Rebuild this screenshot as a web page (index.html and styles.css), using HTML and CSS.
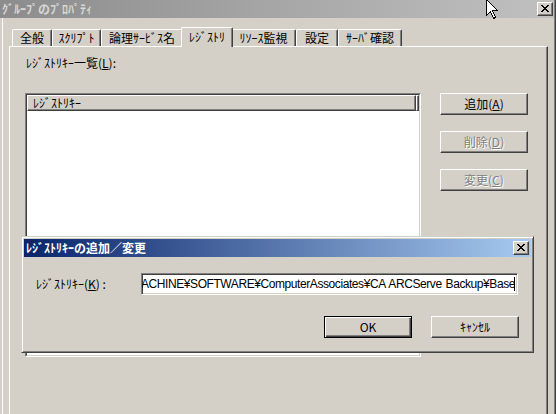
FILE: index.html
```html
<!DOCTYPE html>
<html lang="ja">
<head>
<meta charset="utf-8">
<title>ｸﾞﾙｰﾌﾟのﾌﾟﾛﾊﾟﾃｨ</title>
<link rel="stylesheet" href="styles.css">
</head>
<body>
<div class="window">
  <div class="titlebar">
    <span class="title inactive">ｸﾞﾙｰﾌﾟのﾌﾟﾛﾊﾟﾃｨ</span>
    <span class="capbtn">
      <svg class="xglyph" width="8" height="7" viewBox="0 0 8 7" shape-rendering="crispEdges"><path d="M0 0h2v1h-2z M6 0h2v1h-2z M1 1h2v1h-2z M5 1h2v1h-2z M2 2h4v1h-4z M3 3h2v1h-2z M2 4h4v1h-4z M1 5h2v1h-2z M5 5h2v1h-2z M0 6h2v1h-2z M6 6h2v1h-2z" fill="#000"/></svg>
    </span>
  </div>
  <div class="client">
    <div class="tabs">
      <div class="tab t1">全般</div>
      <div class="tab t2">ｽｸﾘﾌﾟﾄ</div>
      <div class="tab t3">論理ｻｰﾋﾞｽ名</div>
      <div class="tab t4 sel">ﾚｼﾞｽﾄﾘ</div>
      <div class="tab t5">ﾘｿｰｽ監視</div>
      <div class="tab t6">設定</div>
      <div class="tab t7">ｻｰﾊﾞ確認</div>
    </div>
    <div class="panel">
      <div class="label">ﾚｼﾞｽﾄﾘｷｰ一覧(<u>L</u>):</div>
      <div class="row">
        <div class="list">
          <div class="list-inner">
            <div class="lhead">
              <div class="col">ﾚｼﾞｽﾄﾘｷｰ</div>
              <div class="colfill"></div>
            </div>
            <div class="lbody"></div>
          </div>
        </div>
        <div class="btns">
          <div class="btn">追加(<u>A</u>)</div>
          <div class="btn dis">削除(<u>D</u>)</div>
          <div class="btn dis">変更(<u>C</u>)</div>
        </div>
      </div>
    </div>
  </div>
</div>

<div class="dlg">
  <div class="dlgtitle">
    <span class="title">ﾚｼﾞｽﾄﾘｷｰの追加／変更</span>
    <span class="capbtn">
      <svg class="xglyph" width="8" height="7" viewBox="0 0 8 7" shape-rendering="crispEdges"><path d="M0 0h2v1h-2z M6 0h2v1h-2z M1 1h2v1h-2z M5 1h2v1h-2z M2 2h4v1h-4z M3 3h2v1h-2z M2 4h4v1h-4z M1 5h2v1h-2z M5 5h2v1h-2z M0 6h2v1h-2z M6 6h2v1h-2z" fill="#000"/></svg>
    </span>
  </div>
  <div class="dlgbody">
    <div class="field">
      <span class="flabel">ﾚｼﾞｽﾄﾘｷｰ(<u>K</u>) :</span>
      <div class="edit">
        <span class="etext">HKEY_LOCAL_MACHINE¥SOFTWARE¥ComputerAssociates¥CA ARCServe Backup¥Base</span>
        <span class="caret"></span>
      </div>
    </div>
    <div class="actions">
      <div class="btn def">OK</div>
      <div class="btn">ｷｬﾝｾﾙ</div>
    </div>
  </div>
</div>

<svg class="cursor" width="13" height="21" viewBox="0 0 13 21" shape-rendering="crispEdges">
  <path d="M0.5 0.5 L0.5 16.5 L4.5 12.5 L7.5 19.5 L9.5 18.5 L6.5 11.5 L11.5 11.5 Z" fill="#fff" stroke="#000" stroke-width="1" stroke-linejoin="miter"/>
</svg>
</body>
</html>
```

FILE: styles.css
```css
* { box-sizing: border-box; }
html, body { margin: 0; padding: 0; }
body {
  width: 556px;
  height: 414px;
  overflow: hidden;
  position: relative;
  background: #d4d0c8;
  font-family: "Noto Sans CJK JP", "Noto Sans", sans-serif;
  font-size: 12px;
  line-height: 14px;
  color: #000;
}
u { text-decoration: underline; text-underline-offset: 1px; }

/* main window */
.window {
  width: 556px;
  height: 414px;
  border-right: 1px solid #404040;
  box-shadow: inset -1px 0 #808080;
}
.titlebar {
  height: 18px;
  margin-right: 1px;
  padding-left: 2px;
  display: flex;
  align-items: center;
  justify-content: space-between;
  background: linear-gradient(to right, #8c8c8c, #c0c0c0);
}
.title {
  font-weight: bold;
  color: #fff;
  white-space: nowrap;
}
.title.inactive { color: #d8d8d8; }
.capbtn {
  width: 16px;
  height: 14px;
  margin-right: 1px;
  background: #d4d0c8;
  border: 1px solid;
  border-color: #fff #404040 #404040 #fff;
  box-shadow: inset -1px -1px #808080;
  display: flex;
  align-items: center;
  justify-content: center;
  padding: 0 1px 1px 0;
}
.xglyph { display: block; }

.client {
  margin-left: 2px;
  border-left: 1px solid #fff;
  padding: 9px 0 0 6px;
  height: 396px;
}

/* tabs */
.tabs {
  display: flex;
  align-items: flex-end;
  height: 19px;
  padding-left: 3px;
}
.tab {
  height: 17px;
  border-top: 1px solid #fff;
  border-left: 1px solid #fff;
  border-right: 1px solid #404040;
  border-radius: 2px 2px 0 0;
  box-shadow: inset -1px 0 #808080;
  text-align: center;
  line-height: 15px;
  white-space: nowrap;
  flex-shrink: 0;
}
.t1 { width: 40px; }
.t2 { width: 49px; }
.t3 { width: 82px; }
.t4 { width: 48px; }
.t5 { width: 65px; }
.t6 { width: 42px; }
.t7 { width: 64px; }
.tab.sel {
  width: 52px;
  height: 20px;
  margin: 0 -2px -1px -2px;
  padding-top: 1px;
  position: relative;
  z-index: 1;
  background: #d4d0c8;
}

/* tab panel */
.panel {
  width: 539px;
  height: 380px;
  border-top: 1px solid #fff;
  border-left: 1px solid #fff;
  border-right: 1px solid #404040;
  box-shadow: inset -1px 0 #808080;
  padding: 9px 0 0 15px;
}
.label {
  margin-left: 1px;
  white-space: nowrap;
}
.row {
  display: flex;
  gap: 19px;
  margin-top: 23px;
}

/* list view */
.list {
  width: 396px;
  height: 264px;
  border: 1px solid;
  border-color: #808080 #fff #fff #808080;
}
.list-inner {
  height: 100%;
  border: 1px solid;
  border-color: #404040 #d4d0c8 #d4d0c8 #404040;
  background: #fff;
  display: flex;
  flex-direction: column;
}
.lhead {
  display: flex;
  height: 16px;
  background: #d4d0c8;
}
.col, .colfill {
  height: 16px;
  border: 1px solid;
  border-color: #fff #404040 #404040 #fff;
  box-shadow: inset -1px -1px #808080;
}
.col {
  width: 389px;
  padding-left: 5px;
  line-height: 13px;
  white-space: nowrap;
}
.colfill { flex: 1; }
.lbody { flex: 1; background: #fff; }

/* buttons */
.btns {
  display: flex;
  flex-direction: column;
  gap: 16px;
}
.btn {
  width: 88px;
  height: 22px;
  border: 1px solid;
  border-color: #fff #404040 #404040 #fff;
  box-shadow: inset -1px -1px #808080;
  background: #d4d0c8;
  text-align: center;
  line-height: 19px;
  white-space: nowrap;
}
.btn.dis {
  color: #808080;
  text-shadow: 1px 1px 0 #fff;
}
.btn.def {
  border-color: #000;
  box-shadow: inset 1px 1px #fff, inset -1px -1px #404040, inset -2px -2px #808080;
}

/* add/change dialog (floating window) */
.dlg {
  position: absolute;
  left: 21px;
  top: 236px;
  width: 513px;
  height: 117px;
  background: #d4d0c8;
  border: 1px solid;
  border-color: #d4d0c8 #404040 #404040 #d4d0c8;
  box-shadow: inset 1px 1px #fff, inset -1px -1px #808080;
  padding: 2px;
  z-index: 5;
}
.dlgtitle {
  height: 18px;
  padding-left: 2px;
  display: flex;
  align-items: center;
  justify-content: space-between;
  background: linear-gradient(to right, #0a246a, #a6caf0);
}
.dlgtitle .capbtn { margin-right: 2px; }
.dlgbody {
  padding: 16px 12px 0 12px;
}
.field {
  display: flex;
  align-items: center;
  height: 22px;
}
.flabel {
  width: 105px;
  flex-shrink: 0;
  white-space: nowrap;
}
.edit {
  width: 377px;
  height: 22px;
  border: 1px solid;
  border-color: #808080 #fff #fff #808080;
  box-shadow: inset 1px 1px #404040, inset -1px -1px #d4d0c8;
  background: #fff;
  display: flex;
  align-items: center;
  justify-content: flex-end;
  overflow: hidden;
  padding: 0 2px;
}
.etext {
  flex-shrink: 0;
  white-space: nowrap;
  font-family: "Liberation Sans", Arial, sans-serif;
  font-size: 12px;
  letter-spacing: -0.42px;
  word-spacing: 1px;
}
.caret {
  flex-shrink: 0;
  width: 1px;
  height: 14px;
  margin-left: -1px;
  background: #000;
}
.actions {
  display: flex;
  justify-content: flex-end;
  gap: 19px;
  margin-top: 21px;
}

/* mouse pointer overlay */
.cursor {
  position: absolute;
  left: 486px;
  top: -1px;
  z-index: 10;
}
```
